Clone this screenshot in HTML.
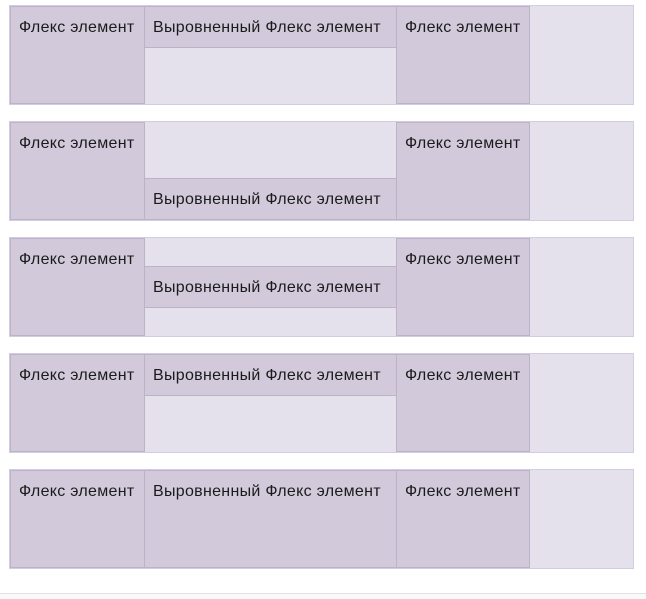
<!DOCTYPE html>
<html><head><meta charset="utf-8"><style>
body{margin:0;width:646px;height:598px;background:#fff;position:relative;overflow:hidden;font-family:"Liberation Sans",sans-serif;font-size:16px;color:#1b1b1b}
.c{position:absolute;left:9px;width:623px;height:98px;border:1px solid #d3cde0;background:#e4e0ec}
.i{position:absolute;box-sizing:border-box;border:1px solid #bdb3c9;background:#d2c9db;padding:10px 0 0 8px;line-height:22px;white-space:nowrap;letter-spacing:0.3px}
.a{left:0;width:135px;top:0;height:98px}
.b{left:134px;width:253px;height:42px}
.d{left:386px;width:134px;top:0;height:98px}
.foot{position:absolute;left:0;right:0;top:593px;height:5px;border-top:1px solid #e2e2e5;background:#f8f9fa}
</style></head><body>
<div class="c" style="top:5px"><div class="i a">Флекс элемент</div><div class="i b" style="top:0">Выровненный Флекс элемент</div><div class="i d">Флекс элемент</div></div>
<div class="c" style="top:121px"><div class="i a">Флекс элемент</div><div class="i b" style="top:56px">Выровненный Флекс элемент</div><div class="i d">Флекс элемент</div></div>
<div class="c" style="top:237px"><div class="i a">Флекс элемент</div><div class="i b" style="top:28px">Выровненный Флекс элемент</div><div class="i d">Флекс элемент</div></div>
<div class="c" style="top:353px"><div class="i a">Флекс элемент</div><div class="i b" style="top:0">Выровненный Флекс элемент</div><div class="i d">Флекс элемент</div></div>
<div class="c" style="top:469px"><div class="i a">Флекс элемент</div><div class="i b" style="top:0;height:98px">Выровненный Флекс элемент</div><div class="i d">Флекс элемент</div></div>
<div class="foot"></div>
</body></html>
